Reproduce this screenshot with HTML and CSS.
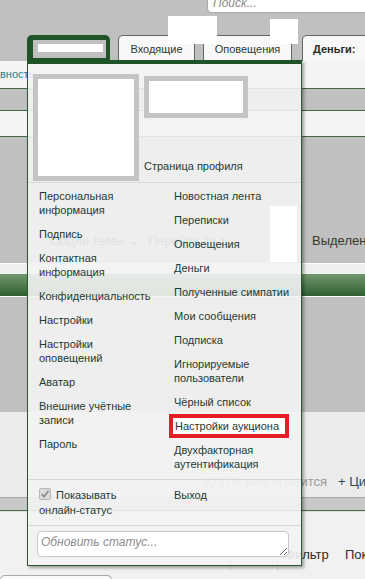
FILE: index.html
```html
<!DOCTYPE html>
<html lang="ru">
<head>
    <meta charset="UTF-8">
    <title>Меню профиля</title>
    <link rel="stylesheet" href="styles.css">
</head>
<body>
<div class="page">

    <!-- Header: search + tabs -->
    <header class="top">
        <div class="search">Поиск...</div>
        <nav class="tabs">
            <div class="tab tab-active"><span class="tab-user"><span class="tab-user-name"></span></span></div>
            <div class="tab tab-inbox">Входящие</div>
            <div class="tab tab-alerts">Оповещения</div>
            <div class="tab tab-money">Деньги:</div>
        </nav>
    </header>

    <!-- Forum page behind the menu -->
    <div class="nav2"><span class="nav2-link">вность</span></div>
    <div class="gap1"></div>
    <div class="light-strip"></div>
    <div class="gray-area">
        <div class="thread-tools">
            <span class="tool-opts">Опции темы ⌄</span>
            <span class="tool-go">Перейти за т</span>
            <span class="tool-sel">Выделенные</span>
        </div>
    </div>
    <div class="pre-head"></div>
    <div class="green-head"></div>
    <div class="gray-area2"></div>
    <div class="post-foot">
        <span class="post-num">#2376</span>
        <span class="post-likes">мне нравится</span>
        <span class="post-quote">+ Цитата</span>
    </div>
    <div class="sep-gray"></div>
    <div class="bottom-bar">
        <div class="filters">
            <span class="filter-cell"></span>
            <span class="filter-cell filter-text">Фильтр</span>
            <span class="filter-more">Показать</span>
        </div>
        <div class="subtab"></div>
    </div>

    <div class="redact redact-1"></div>
    <div class="redact redact-2"></div>

    <!-- Account popup -->
    <div class="popup">
        <div class="profile">
            <div class="avatar"></div>
            <div class="profile-side">
                <div class="name-box"></div>
                <a class="profile-link" href="#">Страница профиля</a>
            </div>
        </div>

        <div class="menu">
            <div class="menu-col menu-left">
                <a href="#">Персональная<br>информация</a>
                <a href="#">Подпись</a>
                <a href="#">Контактная<br>информация</a>
                <a href="#">Конфиденциальность</a>
                <a href="#">Настройки</a>
                <a href="#">Настройки<br>оповещений</a>
                <a href="#">Аватар</a>
                <a href="#">Внешние учётные<br>записи</a>
                <a href="#">Пароль</a>
            </div>
            <div class="menu-col menu-right">
                <a href="#">Новостная лента</a>
                <a href="#">Переписки</a>
                <a href="#">Оповещения</a>
                <a href="#">Деньги</a>
                <a href="#">Полученные симпатии</a>
                <a href="#">Мои сообщения</a>
                <a href="#">Подписка</a>
                <a href="#">Игнорируемые<br>пользователи</a>
                <a href="#">Чёрный список</a>
                <a href="#" class="marked">Настройки аукциона</a>
                <a href="#">Двухфакторная<br>аутентификация</a>
            </div>
        </div>

        <div class="menu-foot">
            <div class="menu-col menu-left">
                <label class="online">
                    <span class="check">
                        <svg width="10" height="10" viewBox="0 0 10 10"><polyline points="1.5,5.2 4,7.6 8.6,1.8" fill="none" stroke="#8f8f8f" stroke-width="1.8"/></svg>
                    </span>Показывать<br>онлайн-статус
                </label>
            </div>
            <div class="menu-col menu-right">
                <a href="#">Выход</a>
            </div>
        </div>

        <div class="status">
            <textarea placeholder="Обновить статус..."></textarea>
        </div>
    </div>

    <div class="redact redact-3"></div>
</div>
</body>
</html>
```

FILE: styles.css
```css
/* Basic reset */
* {
    margin: 0;
    padding: 0;
    box-sizing: border-box;
}

body {
    font-family: "Liberation Sans", Arial, sans-serif;
    background: #c0c0c0;
    overflow: hidden;
}

.page {
    position: relative;
    width: 365px;
    height: 579px;
    overflow: hidden;
    white-space: nowrap;
}

/* Header */
.top {
    height: 61px;
}

.search {
    margin-left: 207px;
    height: 13px;
    padding-left: 5px;
    background: #fff;
    border-left: 1px solid #a9a9a9;
    border-bottom: 1px solid #a9a9a9;
    border-bottom-left-radius: 5px;
    font-size: 12px;
    font-style: italic;
    line-height: 6px;
    color: #8c8c8c;
}

.tabs {
    display: flex;
    margin-top: 22px;
    height: 26px;
}

.tab {
    flex-shrink: 0;
    height: 26px;
    margin-left: 8px;
    border: 1px solid #5d6b5d;
    border-bottom: 0;
    border-radius: 5px 5px 0 0;
    background: #f8f8f8;
    font-size: 11px;
    line-height: 26px;
    text-align: center;
    color: #2c3a2c;
}

.tab-active {
    margin-left: 27px;
    width: 83px;
    padding: 5px 3px 0 6px;
    border: 0;
    background: #1e5427;
}

.tab-user {
    display: block;
    width: 73px;
    height: 18px;
    padding: 4px 3px 0 5px;
    background: #bfbfbf;
}

.tab-user-name {
    display: block;
    width: 65px;
    height: 8px;
    background: #fff;
}

.tab-inbox {
    width: 77px;
}

.tab-alerts {
    width: 89px;
}

.tab-money {
    margin-left: 10px;
    width: 80px;
    padding-left: 10px;
    text-align: left;
    font-weight: bold;
    color: #1e2c1e;
}

/* Page behind the popup */
.nav2 {
    height: 28px;
    background: #f4f4f4;
    border-bottom: 1px solid #3d6a40;
    font-size: 11px;
    line-height: 27px;
}

.nav2-link {
    color: #2a7a8c;
}

.gap1 {
    height: 21px;
}

.light-strip {
    height: 27px;
    background: #f4f4f4;
    border-top: 1px solid #3d6a40;
    border-bottom: 1px solid #3d6a40;
}

.gray-area {
    height: 126px;
    padding-top: 96px;
}

.thread-tools {
    display: flex;
    font-size: 13px;
    line-height: 16px;
    color: #38382c;
}

.thread-tools span,
.post-foot span,
.filters span {
    flex-shrink: 0;
}

.tool-opts {
    margin-left: 50px;
    width: 98px;
}

.tool-go {
    width: 164px;
}

.gray-area2 {
    height: 115px;
}

.pre-head {
    height: 11px;
    background: #efefef;
    border-top: 1px solid #fff;
}

.green-head {
    height: 23px;
    background: linear-gradient(#72976f, #2e5e32);
    border-bottom: 1px solid #fff;
}

.post-foot {
    display: flex;
    height: 85px;
    padding-top: 62px;
    background: #ececec;
    font-size: 13px;
    line-height: 16px;
    color: #9a9a9a;
}

.post-num {
    margin-left: 203px;
    width: 30px;
}

.post-likes {
    width: 105px;
    padding-right: 11px;
    text-align: right;
}

.post-quote {
    color: #2b4a5a;
}

.sep-gray {
    height: 14px;
    background: #c8c8c8;
    border-top: 1px solid #a9a9a9;
    border-bottom: 1px solid #4e6e50;
}

.bottom-bar {
    height: 69px;
    background: #f1f1f1;
    border-top: 1px solid #dcdcdc;
}

.filters {
    display: flex;
    margin-top: 34px;
    margin-left: 230px;
    height: 25px;
    font-size: 13px;
    line-height: 16px;
    color: #2d2d2d;
}

.filter-cell {
    width: 47px;
    border-left: 1px solid #d8d8d8;
}

.filter-text {
    width: 68px;
    padding: 1px 0 0 7px;
}

.filter-more {
    padding-top: 1px;
}

.subtab {
    width: 112px;
    height: 12px;
    margin-top: 4px;
    background: #fafafa;
    border: 1px solid #a8a8a8;
    border-bottom: 0;
    border-radius: 5px 5px 0 0;
}

/* White cover boxes */
.redact {
    position: absolute;
    background: #fff;
}

.redact-1 {
    left: 168px;
    top: 16px;
    width: 49px;
    height: 28px;
}

.redact-2 {
    left: 270px;
    top: 19px;
    width: 28px;
    height: 25px;
}

.redact-3 {
    left: 270px;
    top: 206px;
    width: 27px;
    height: 56px;
}

/* Popup */
.popup {
    position: absolute;
    left: 27px;
    top: 60px;
    width: 275px;
    background: rgba(243, 243, 243, 0.9);
    border: 1px solid #2b5a2f;
    border-top: 4px solid #1e5427;
    box-shadow: 2px 2px 3px rgba(0, 0, 0, 0.35);
    font-size: 11px;
    color: #1f3a30;
}

.popup a {
    color: #1f3a30;
    text-decoration: none;
}

.profile {
    display: flex;
    height: 119px;
    padding: 10px 0 0 5px;
    border-bottom: 1px solid #dadada;
}

.avatar {
    width: 106px;
    height: 107px;
    border: 5px solid #c4c4c4;
    background: #fff;
}

.profile-side {
    display: flex;
    flex-direction: column;
    justify-content: space-between;
    height: 107px;
    margin-left: 5px;
}

.name-box {
    width: 104px;
    height: 42px;
    margin-top: 2px;
    border: 5px solid #c4c4c4;
    background: #fff;
}

.profile-link {
    line-height: 14px;
    margin-bottom: 8px;
}

.menu,
.menu-foot {
    display: grid;
    grid-template-columns: 141px 1fr;
    border-bottom: 1px solid #d6d6d6;
}

.menu {
    padding: 1px 0 3px;
}

.menu-foot {
    padding: 3px 0 2px;
}

.menu-col a {
    display: block;
    padding: 5px;
    line-height: 14px;
}

.menu-left a {
    padding-left: 11px;
}

.menu-right .marked {
    width: fit-content;
    padding: 1px 6px 1px 2px;
    border: 4px solid #e31e24;
    background: #fff;
}

.online {
    display: block;
    padding: 5px 5px 5px 11px;
    line-height: 15px;
}

.check {
    display: inline-block;
    width: 12px;
    height: 12px;
    margin-right: 5px;
    vertical-align: -1px;
    background: #dcdcdc;
    border: 1px solid #b8b8b8;
    border-radius: 2px;
}

.check svg {
    display: block;
}

.status {
    padding: 5px 12px 8px 9px;
}

.status textarea {
    display: block;
    width: 100%;
    height: 26px;
    padding: 3px;
    border: 1px solid #c8c8c8;
    border-radius: 4px;
    background: #fff;
    font-family: "Liberation Sans", Arial, sans-serif;
    font-size: 12px;
    line-height: 15px;
}

.status textarea::placeholder {
    font-style: italic;
    color: #8d8d8d;
}
```
